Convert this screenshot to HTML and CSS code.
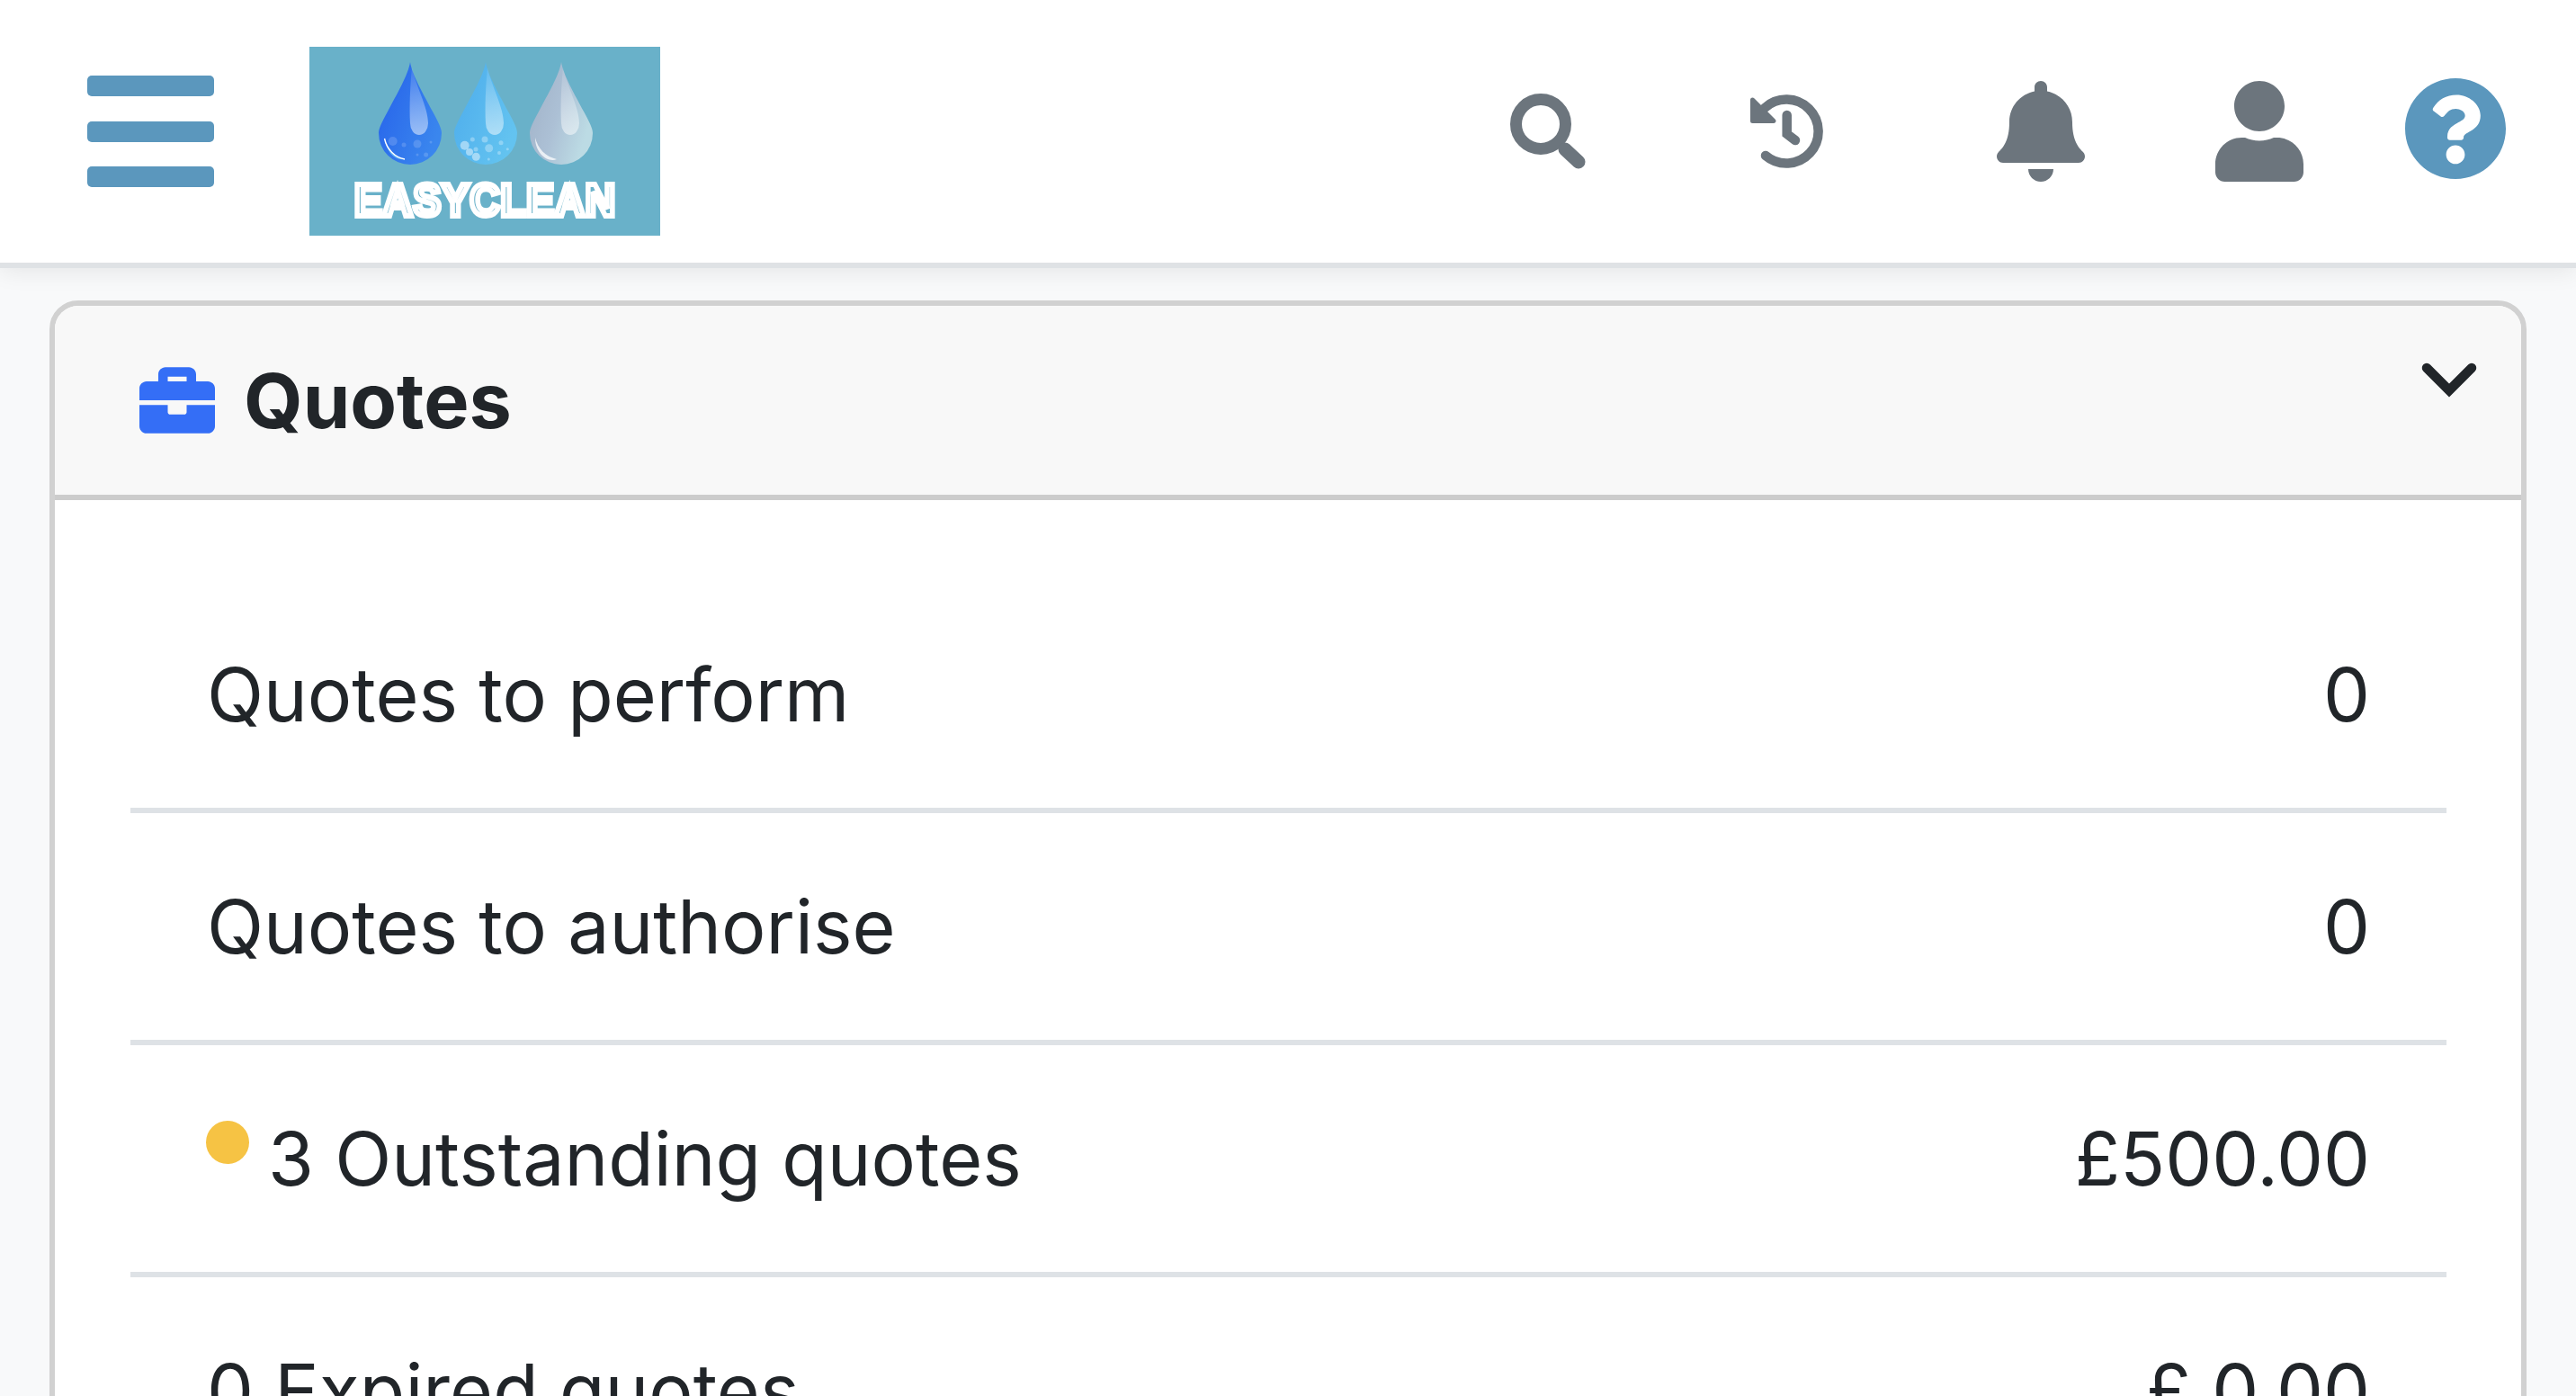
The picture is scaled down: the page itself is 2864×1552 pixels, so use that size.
FILE: index.html
```html
<!DOCTYPE html>
<html lang="en">
<head>
<meta charset="utf-8">
<title>Easyclean - Quotes</title>
<link rel="stylesheet" href="styles.css">
</head>
<body>
<header class="topbar">
  <button class="menu-toggle" type="button" aria-label="Menu"><span></span><span></span><span></span></button>
  <svg class="logo" viewBox="0 0 390 210" role="img" aria-label="Easyclean">
    <defs>
      <linearGradient id="blueBody" x1="0" y1="0" x2="1" y2="0.6"><stop offset="0" stop-color="#2560ea"/><stop offset="1" stop-color="#3a86ee"/></linearGradient>
      <linearGradient id="skyBody" x1="0" y1="0" x2="1" y2="0.6"><stop offset="0" stop-color="#4cabec"/><stop offset="1" stop-color="#63c3f0"/></linearGradient>
      <linearGradient id="greyBody" x1="0" y1="0" x2="1" y2="0.5"><stop offset="0" stop-color="#9fb0c6"/><stop offset="0.55" stop-color="#acc0d5"/><stop offset="1" stop-color="#bcdbe4"/></linearGradient>
      <linearGradient id="shine" x1="0" y1="0" x2="0" y2="1"><stop offset="0" stop-color="#fff" stop-opacity="0.08"/><stop offset="1" stop-color="#fff" stop-opacity="0.5"/></linearGradient>
      <path id="drop" d="M35 0C37 14 50 36 60 55C67 68 70 74 70 79A35 35 0 0 1 0 79C0 74 3 68 10 55C20 36 33 14 35 0Z"/>
      <path id="gleam" d="M37 6C41 26 55 50 55 68A10 13 0 0 1 35 68C34 50 35 26 37 6Z"/>
    </defs>
    <rect class="logo-bg" width="390" height="210"/>
    <g transform="translate(77 17)">
      <use href="#drop" fill="url(#blueBody)"/>
      <use href="#gleam" fill="url(#shine)"/>
      <g class="bubbles-dim">
        <circle cx="15.7" cy="88" r="5"/><circle cx="28" cy="92" r="2.5"/><circle cx="43" cy="91" r="4.5"/><circle cx="58" cy="89" r="1.5"/><circle cx="43" cy="103" r="1.5"/><circle cx="52.6" cy="103" r="2.5"/>
      </g>
      <path class="glow-blue" d="M7 86C10 98 18 106 29 108C18 110 9 100 7 86Z"/>
      <path class="crescent" d="M6.5 85C9 97 18 106 29 108"/>
    </g>
    <g transform="translate(161 17)">
      <use href="#drop" fill="url(#skyBody)"/>
      <use href="#gleam" fill="url(#shine)"/>
      <g class="bubbles">
        <circle cx="20.3" cy="86" r="2.5"/><circle cx="34" cy="86" r="3.5"/><circle cx="52" cy="89.7" r="2.5"/><circle cx="59.3" cy="96.7" r="1.5"/><circle cx="38.7" cy="95.7" r="4.5"/><circle cx="24" cy="97" r="2.5"/><circle cx="50" cy="101" r="2"/><circle cx="38.3" cy="108" r="1.5"/>
      </g>
      <g class="bubbles-pale"><circle cx="11.7" cy="92.7" r="5"/><circle cx="24.3" cy="105.3" r="4.5"/><circle cx="17" cy="100" r="4"/></g>
    </g>
    <g transform="translate(245 17)">
      <use href="#drop" fill="url(#greyBody)"/>
      <use href="#gleam" fill="url(#shine)"/>
      <path class="glow-white" d="M6 84C9 96 17 105 30 108C20 112 6 102 6 84Z"/>
    </g>
    <text class="logo-text" transform="translate(50 188) scale(1 1.1)" textLength="290" lengthAdjust="spacing">EASYCLEAN</text>
  </svg>
  <nav class="actions">
    <svg class="icon icon-search" viewBox="0 0 85 84"><circle cx="35" cy="34" r="27.5"/><path d="M62 62L77 76"/></svg>
    <svg class="icon icon-history" viewBox="0 0 81 82"><path d="M16 15A35.5 35.5 0 1 1 17 68"/><path class="arrow" d="M2.5 6L26 29.5H2.5Z"/><path d="M40.7 23V44L50 51"/></svg>
    <svg class="icon icon-bell" viewBox="0 0 448 512"><path d="M224 512c35.32 0 63.97-28.65 63.97-64H160.03c0 35.35 28.65 64 63.97 64zm215.39-149.71c-19.32-20.76-55.47-51.99-55.47-154.29 0-77.7-54.48-139.9-127.94-155.16V32c0-17.67-14.32-32-31.98-32s-31.98 14.33-31.98 32v20.84C118.56 68.1 64.08 130.3 64.08 208c0 102.3-36.15 133.53-55.47 154.29-6 6.45-8.66 14.16-8.61 21.71.11 16.4 12.98 32 32.1 32h383.8c19.12 0 32-15.6 32.1-32 .05-7.55-2.61-15.27-8.61-21.71z"/></svg>
    <svg class="icon icon-user" viewBox="0 0 448 512"><path d="M224 256c70.7 0 128-57.3 128-128S294.7 0 224 0 96 57.3 96 128s57.3 128 128 128zm89.6 32h-16.7c-22.2 10.2-46.9 16-72.9 16s-50.6-5.8-72.9-16h-16.7C60.2 288 0 348.2 0 422.4V464c0 26.5 21.5 48 48 48h352c26.5 0 48-21.5 48-48v-41.6c0-74.2-60.2-134.4-134.4-134.4z"/></svg>
    <svg class="icon icon-help" viewBox="8 8 496 496"><path d="M504 256c0 136.997-111.043 248-248 248S8 392.997 8 256C8 119.083 119.043 8 256 8s248 111.083 248 248zM262.655 90c-54.497 0-89.255 22.957-116.549 63.758-3.536 5.286-2.353 12.415 2.715 16.258l34.699 26.31c5.205 3.947 12.621 3.008 16.665-2.122 17.864-22.658 30.113-35.797 57.303-35.797 20.429 0 45.698 13.148 45.698 32.958 0 14.976-12.363 22.667-32.534 33.976C247.128 238.528 216 254.941 216 296v4c0 6.627 5.373 12 12 12h56c6.627 0 12-5.373 12-12v-1.333c0-28.462 83.186-29.647 83.186-106.667 0-58.002-60.165-102-116.531-102zM256 338c-25.365 0-46 20.635-46 46 0 25.364 20.635 46 46 46s46-20.636 46-46c0-25.365-20.635-46-46-46z"/></svg>
  </nav>
</header>
<main class="page">
  <section class="card">
    <div class="card-head">
      <svg class="briefcase" viewBox="0 32 512 448"><path d="M320 336c0 8.84-7.16 16-16 16h-96c-8.84 0-16-7.16-16-16v-48H0v144c0 25.6 22.4 48 48 48h416c25.6 0 48-22.4 48-48V288H320v48zm144-208h-80V80c0-25.6-22.4-48-48-48H176c-25.6 0-48 22.4-48 48v48H48c-25.6 0-48 22.4-48 48v80h512v-80c0-25.6-22.4-48-48-48zm-144 0H192V96h128v32z"/></svg>
      <h2 class="card-title">Quotes</h2>
      <svg class="chevron" viewBox="0 0 64 39"><path d="M7 7L32 32L57 7"/></svg>
    </div>
    <ul class="rows">
      <li class="row"><span class="label">Quotes to perform</span><span class="value">0</span></li>
      <li class="row"><span class="label">Quotes to authorise</span><span class="value">0</span></li>
      <li class="row"><span class="label"><i class="dot"></i>3 Outstanding quotes</span><span class="value">£500.00</span></li>
      <li class="row"><span class="label">0 Expired quotes</span><span class="value">£ 0.00</span></li>
    </ul>
  </section>
</main>
</body>
</html>
```
FILE: styles.css
```css
* { box-sizing: border-box; }
html, body { height: 100%; }
body {
  margin: 0;
  overflow: hidden;
  background: #f8f9fa;
  color: #212529;
  font-family: Inter, "Liberation Sans", sans-serif;
}

.topbar {
  display: flex;
  align-items: center;
  height: 292px;
  padding: 0 78px 0 97px;
  background: #fff;
  box-shadow: 0 6px 0 #dfe2e5, 0 8px 26px rgba(0, 0, 0, .09);
  position: relative;
}
.menu-toggle {
  display: flex;
  flex-direction: column;
  gap: 27.5px;
  width: 141px;
  padding: 0;
  border: 0;
  background: none;
}
.menu-toggle span { display: block; height: 23px; border-radius: 5px; background: #5b97bd; }

.logo { width: 390px; height: 210px; margin: 22px 0 0 106px; flex: none; }
.logo-bg { fill: #69b1c9; }
.bubbles-dim circle { fill: #fff; opacity: .16; }
.bubbles circle { fill: #fff; opacity: .3; }
.bubbles-pale circle { fill: #fff; opacity: .45; }
.crescent { fill: none; stroke: #fff; stroke-width: 1.4; }
.glow-blue { fill: #7fd6f5; opacity: .7; }
.glow-white { fill: #fff; opacity: .75; }
.logo-text {
  font-family: "Liberation Sans", sans-serif;
  font-weight: 700;
  font-size: 46px;
  fill: #69b1c9;
  stroke: #fff;
  stroke-width: 5.5px;
}

.actions { display: flex; align-items: center; margin-left: auto; }
.icon { flex: none; display: block; fill: #6c757d; }
.icon-search { width: 85px; height: 84px; margin-right: 183px; fill: none; stroke: #6c757d; stroke-width: 13px; }
.icon-search path { stroke-width: 15px; stroke-linecap: round; }
.icon-history { width: 81px; height: 82px; margin-right: 193px; fill: none; stroke: #6c757d; stroke-width: 10.5px; stroke-linecap: round; }
.icon-history .arrow { fill: #6c757d; stroke-width: 5px; stroke-linejoin: round; }
.icon-bell { width: 98px; height: 112px; margin-right: 145px; }
.icon-user { width: 98px; height: 112px; margin-right: 113px; }
.icon-help { width: 112px; height: 112px; margin-bottom: 6px; fill: #5b97bd; }

.page { padding: 42px 55px 0; }
.card {
  border: 6px solid #d1d1d1;
  border-radius: 32px;
  background: #fff;
  overflow: hidden;
}
.card-head {
  display: flex;
  align-items: center;
  height: 216px;
  padding: 0 48px 0 94px;
  background: #f8f8f8;
  border-bottom: 6px solid #ccc;
}
.briefcase { width: 84px; height: 74px; flex: none; margin-right: 32px; fill: #346ef6; }
.card-title { margin: 0; font-size: 84.5px; font-weight: 700; line-height: 1; }
.chevron {
  width: 64px;
  height: 39px;
  margin-left: auto;
  align-self: flex-start;
  margin-top: 62px;
  fill: none;
  stroke: #212529;
  stroke-width: 10.5px;
  stroke-linecap: round;
  overflow: visible;
}

.rows { list-style: none; margin: 0 83px 0 84px; padding: 90px 0 0; }
.row {
  display: flex;
  justify-content: space-between;
  align-items: center;
  height: 258px;
  padding: 0 85px;
  border-bottom: 6px solid #dee2e6;
  font-size: 82.5px;
}
.label { display: flex; align-items: center; }
.dot {
  width: 48px;
  height: 48px;
  margin: 0 21px 36px -1px;
  border-radius: 50%;
  background: #f6c344;
}
```
